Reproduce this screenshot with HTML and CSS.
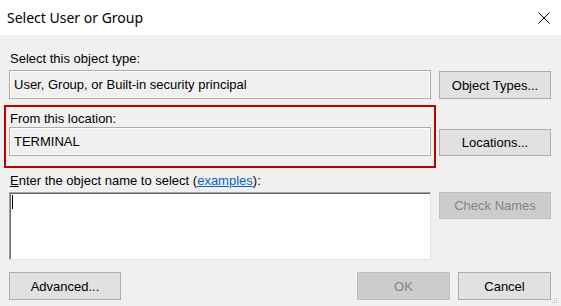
FILE: index.html
```html
<!DOCTYPE html>
<html lang="en">
<head>
  <meta charset="UTF-8" />
  <title>Select User or Group</title>
  <link rel="stylesheet" href="styles.css">
</head>
<body>

<div class="dialog">
  <div class="titlebar">
    <span class="title">Select User or Group</span>
    <svg class="close" width="12" height="12" viewBox="0 0 12 12">
      <path d="M0.5 0.5 L11.5 11.5 M11.5 0.5 L0.5 11.5" stroke="#000" stroke-width="1" fill="none" />
    </svg>
  </div>

  <div class="content">
    <div class="row">
      <div class="field">
        <div class="label">Select this object type:</div>
        <div class="readonly">User, Group, or Built-in security principal</div>
      </div>
      <button class="btn">Object Types...</button>
    </div>

    <div class="row row-location">
      <div class="field highlight">
        <div class="label">From this location:</div>
        <div class="readonly">TERMINAL</div>
      </div>
      <button class="btn">Locations...</button>
    </div>

    <div class="row row-names">
      <div class="field">
        <div class="label"><u>E</u>nter the object name to select (<a href="#">examples</a>):</div>
        <div class="entry"><span class="caret"></span></div>
      </div>
      <button class="btn" disabled>Check Names</button>
    </div>

    <div class="footer">
      <button class="btn">Advanced...</button>
      <div class="footer-right">
        <button class="btn btn-small" disabled>OK</button>
        <button class="btn btn-small">Cancel</button>
      </div>
    </div>
  </div>

  <svg class="grip" width="6" height="6" viewBox="0 0 6 6">
    <rect x="4" y="0" width="1" height="1" fill="#b8b8b8" />
    <rect x="2" y="2" width="1" height="1" fill="#b8b8b8" />
    <rect x="4" y="2" width="1" height="1" fill="#b8b8b8" />
    <rect x="0" y="4" width="1" height="1" fill="#b8b8b8" />
    <rect x="2" y="4" width="1" height="1" fill="#b8b8b8" />
    <rect x="4" y="4" width="1" height="1" fill="#b8b8b8" />
  </svg>
</div>

</body>
</html>
```

FILE: styles.css
```css
body {
  margin: 0;
  padding: 0;
  background: #f0f0f0;
  font-family: "Liberation Sans", Arial, sans-serif;
  font-size: 13px;
  color: #000;
  overflow: hidden;
}

.dialog {
  position: relative;
  width: 561px;
  height: 306px;
  background: #f0f0f0;
}

.titlebar {
  height: 35px;
  background: #fff;
  display: flex;
  align-items: center;
  justify-content: space-between;
  padding: 0 11px 0 7px;
}

.title {
  font-family: "Noto Sans", "Open Sans", sans-serif;
  font-size: 14px;
  padding-bottom: 1px;
}

.close {
  display: block;
}

.content {
  padding: 16px 10px 0 9px;
}

.row {
  display: flex;
  gap: 8px;
  align-items: flex-end;
}

.field {
  width: 422px;
}

.label {
  height: 15px;
  line-height: 15px;
  padding-left: 1px;
  margin-bottom: 4px;
}

.label a {
  color: #0066cc;
}

.readonly {
  height: 27px;
  line-height: 27px;
  border: 1px solid #acacac;
  box-shadow: inset 0 0 0 1px #fff;
  padding-left: 4px;
  white-space: nowrap;
}

.btn {
  width: 112px;
  height: 28px;
  margin: 0;
  padding: 0;
  background: #e1e1e1;
  border: 1px solid #adadad;
  font-family: "Liberation Sans", Arial, sans-serif;
  font-size: 13px;
  color: #000;
}

.btn:disabled {
  background: #cccccc;
  border-color: #bfbfbf;
  color: #838383;
}

.btn-small {
  width: 93px;
}

.row-location {
  margin-top: 6px;
}

.highlight {
  margin: 0 -5px;
  padding: 4px 3px 10px;
  border: 2px solid #c00000;
}

.highlight .label {
  margin-bottom: 1px;
}

.row-location .btn {
  margin-bottom: 12px;
  height: 27px;
}

.row-names {
  margin-top: 5px;
  align-items: flex-start;
}

.row-names .btn {
  margin-top: 19px;
  height: 27px;
}

.entry {
  position: relative;
  height: 66px;
  background: #fff;
  border: 1px solid;
  border-color: #a0a0a0 #e3e3e3 #e3e3e3 #a0a0a0;
  box-shadow: inset 1px 1px #696969;
}

.caret {
  position: absolute;
  left: 2px;
  top: 2px;
  width: 1px;
  height: 14px;
  background: #000;
}

.footer {
  display: flex;
  justify-content: space-between;
  margin-top: 12px;
}

.footer-right {
  display: flex;
  gap: 8px;
}

.grip {
  position: absolute;
  right: 3px;
  bottom: 2px;
}
```
